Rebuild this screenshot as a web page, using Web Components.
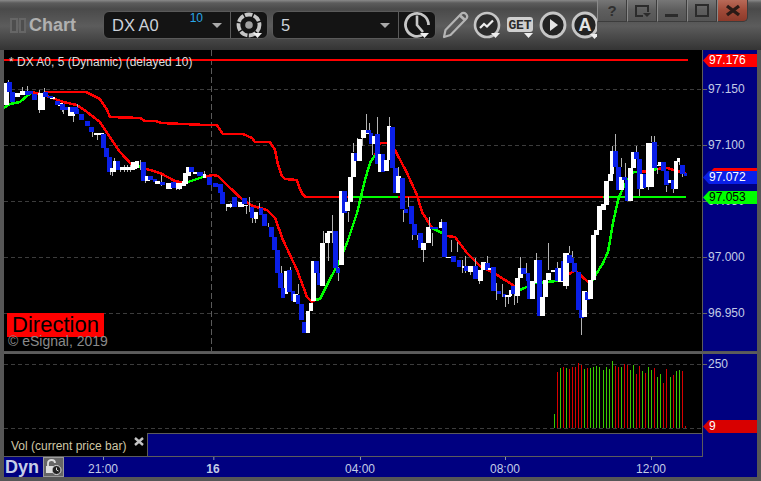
<!DOCTYPE html>
<html lang="en">
<head>
<meta charset="UTF-8">
<title>Chart</title>
<style>
  html, body { margin: 0; padding: 0; background: #555; }
  body { font-family: "Liberation Sans", Arial, sans-serif; }
</style>
</head>
<body>
<es-window>
  <es-titlebar slot="title"></es-titlebar>
  <es-price-chart slot="price"></es-price-chart>
  <es-axis slot="price-axis" kind="price"></es-axis>
  <es-volume slot="volume"></es-volume>
  <es-study-tab slot="tab" label="Vol (current price bar)"></es-study-tab>
  <es-axis slot="volume-axis" kind="volume"></es-axis>
  <es-time-axis slot="time"></es-time-axis>
</es-window>

<script>
  // small helper, every component sets its markup in an open shadow root
  class Base extends HTMLElement {
    constructor() {
      super();
      this.attachShadow({ mode: 'open' });
    }
    connectedCallback() {
      this.shadowRoot.innerHTML = this.markup();
    }
  }

  const CARET = (x, y) => `<path d="M${x} ${y}h9l-4.5 5z" fill="#eee"/>`;

  class EsWindow extends Base {
    markup() {
      return `
        <style>
          :host { display: flex; flex-direction: column; width: 761px; height: 481px; box-sizing: border-box;
            padding: 0 4px 4px; background: #565656; overflow: hidden; }
          .title { display: block; flex: none; height: 50px; margin: 0 -4px; }
          .row { display: flex; }
          .price { height: 301px; }
          .sep { height: 2px; flex: none; margin-right: 0; background: #5c5c5c; margin-top: 1px; }
          .lower { height: 103px; }
          .col { display: flex; flex-direction: column; width: 698px; flex: none; }
          .right { width: 54px; flex: none; border-left: 1px solid #5c5c5c; background: #000080; }
          .time { height: 20px; flex: none; }
          ::slotted([slot=price]), ::slotted([slot=volume]) { flex: none; width: 698px; }
          ::slotted([slot=price-axis]), ::slotted([slot=volume-axis]) { flex: 1; }
        </style>
        <div class="title"><slot name="title"></slot></div>
        <div class="row price"><slot name="price"></slot><div class="right" style="display:flex"><slot name="price-axis"></slot></div></div>
        <div class="sep"></div>
        <div class="row lower">
          <div class="col"><slot name="volume"></slot><slot name="tab"></slot></div>
          <div class="right" style="display:flex"><slot name="volume-axis"></slot></div>
        </div>
        <div class="time"><slot name="time"></slot></div>`;
    }
  }

  class EsCombo extends Base {
    markup() {
      const badge = this.getAttribute('badge');
      return `
        <style>
          :host { display: flex; align-items: stretch; height: 28px; box-sizing: border-box; background: #141414;
            border: 1px solid #5a5a5a; border-radius: 6px; color: #ccd2da; font-size: 16.5px; }
          .field { flex: 1; display: flex; align-items: center; padding-left: 8px; position: relative; }
          .badge { position: absolute; top: 0; right: 27px; font-size: 12px; line-height: 13px; color: #2aa6e6; }
          .caret { margin-left: auto; margin-right: 8px; width: 0; height: 0; border: 5px solid transparent;
            border-top: 5px solid #aaa; border-bottom: 0; }
          .tool { width: 36px; flex: none; border-left: 1px solid #5a5a5a; display: flex; align-items: center; justify-content: center; }
        </style>
        <div class="field">${this.getAttribute('value')}
          ${badge ? `<span class="badge">${badge}</span>` : ''}
          <span class="caret"></span></div>
        <div class="tool"><slot></slot></div>`;
    }
  }

  class EsWinControls extends Base {
    markup() {
      const d = '#2b2b2b';
      return `
        <style>
          :host { display: flex; height: 22px; align-self: flex-start; }
          .b { width: 30px; box-sizing: border-box; height: 22px; display: flex; align-items: center; justify-content: center;
            background: linear-gradient(#777, #5f5f5f 45%, #555); border-right: 1px solid #3c3c3c;
            border-bottom: 1px solid #3c3c3c; border-left: 1px solid #8a8a8a; color: #2f2f2f; font: bold 15px "Liberation Sans", sans-serif; }
          .b:first-child { border-bottom-left-radius: 4px; }
          .x { width: 31px; background: linear-gradient(#b86a58, #a04a38 50%, #8c3a2a); border-bottom-right-radius: 5px; }
        </style>
        <div class="b">?</div>
        <div class="b"><svg width="20" height="18" fill="none" stroke="${d}" stroke-width="2"><path d="M11 14H4V4h12v6"/><path d="M11 11h8l-4 4z" fill="${d}" stroke="none"/></svg></div>
        <div class="b"><svg width="16" height="16"><rect x="1" y="11" width="13" height="3" fill="${d}"/></svg></div>
        <div class="b"><svg width="16" height="16" fill="none" stroke="${d}" stroke-width="2"><rect x="2" y="2" width="12" height="11"/></svg></div>
        <div class="b x"><svg width="16" height="16" stroke="#2b1a16" stroke-width="3.4"><path d="M2 3l12 9M14 3L2 12"/></svg></div>`;
    }
  }

  class EsTitlebar extends Base {
    markup() {
      const ring = '#c6c6c6';
      return `
        <style>
          :host { display: flex; align-items: center; height: 50px; padding-left: 10px; box-sizing: border-box;
            background: linear-gradient(#8a8a8a, #5c5c5c 3px, #4a4a4a 9px, #5c5c5c 26px, #343434 50px); overflow: hidden; }
          .grip { width: 16px; height: 15px; display: flex; gap: 1px; margin-right: 3px; }
          .grip i { flex: 1; border: 2px solid #666; background: #4e4e4e; }
          .name { font: bold 18px "Liberation Sans", sans-serif; color: #b0b0b0; width: 74px; }
          es-combo { flex: none; }
          .sym { width: 165px; }
          .per { width: 164px; margin-left: 4px; }
          svg { display: block; flex: none; }
          .tools { display: flex; align-items: center; width: 161px; flex: none; overflow: hidden; height: 50px; }
        </style>
        <div class="grip"><i></i><i></i></div>
        <div class="name">Chart</div>
        <es-combo class="sym" value="DX A0" badge="10">
          <svg width="30" height="28" viewBox="0 0 30 28">
            <circle cx="15" cy="14" r="10.500" fill="none" stroke="${ring}" stroke-width="3.800" stroke-dasharray="7.600 1.400"/>
            <circle cx="15" cy="14" r="3.800" fill="#a0a0a0"/>
            ${CARET(19, 22)}
          </svg>
        </es-combo>
        <es-combo class="per" value="5">
          <svg width="30" height="28" viewBox="0 0 30 28">
            <path d="M22 23A11.500 11.500 0 1 1 26.500 14" fill="none" stroke="${ring}" stroke-width="2.800"/>
            <path d="M15 4.500V14l6 7" fill="none" stroke="${ring}" stroke-width="2.600"/>
            ${CARET(18, 22)}
          </svg>
        </es-combo>
        <div class="tools">
          <svg width="34" height="30" viewBox="0 0 34 30" style="margin-left:2px">
            <path d="M6 27l1.500-7L23 4c1.500-1.500 3.500-1.500 5 0s1.500 3.500 0 5L12.500 25z" fill="none" stroke="#b4b4b4" stroke-width="2.200" stroke-linejoin="round"/>
            <path d="M22 5.500l5.500 5" stroke="#b4b4b4" stroke-width="3"/>
          </svg>
          <svg width="30" height="30" viewBox="0 0 30 30">
            <circle cx="15" cy="15" r="12" fill="#2c2c2c" stroke="${ring}" stroke-width="2.600"/>
            <path d="M8 18l4-4 3 2.500 6-6" fill="none" stroke="#eee" stroke-width="2.200"/>
            ${CARET(19, 23)}
          </svg>
          <svg width="30" height="30" viewBox="0 0 30 30" style="margin-left:3px">
            <rect x="2" y="7" width="26" height="15" rx="3" fill="#cfcfcf"/>
            <text x="15" y="19" text-anchor="middle" font-family="Liberation Mono" font-weight="bold" font-size="13" fill="#2a2a2a" textLength="23">GET</text>
            ${CARET(19, 23)}
          </svg>
          <svg width="30" height="30" viewBox="0 0 30 30" style="margin-left:3px">
            <circle cx="15" cy="15" r="12" fill="#232323" stroke="${ring}" stroke-width="2.800"/>
            <path d="M12 9l8 6-8 6z" fill="#e4e4e4"/>
          </svg>
          <svg width="30" height="30" viewBox="0 0 30 30" style="margin-left:2px">
            <circle cx="15" cy="15" r="12" fill="#232323" stroke="${ring}" stroke-width="2.800"/>
            <text x="15" y="21" text-anchor="middle" font-family="Liberation Sans" font-weight="bold" font-size="18" fill="#e4e4e4">A</text>
            ${CARET(20, 24)}
          </svg>
        </div>
        <es-win-controls></es-win-controls>`;
    }
  }

  // candles as [colour, left, right, top, bottom] in screen coordinates, read off the chart
  const CANDLES = `W4 9 83 105,B7 12 82 92,B10 15 92 102,W15 20 93 97,W20 25 91 95,B25 30 91 95,B28 33 91 94,B32 37 94 100,W38 45 93 110,B43 48 92 97,
W50 55 97 99,B48 53 96 98,W58 63 103 106,B55 60 101 105,B60 65 104 110,B65 70 107 110,W68 75 107 116,B70 78 107 112,B74 79 109 114,B79 84 114 120,B85 90 121 126,B89 94 127 132,W94 104 133 135,B101 106 134 148,
B104 109 148 157,B107 112 157 172,W110 115 168 172,W113 116 161 172,B116 120 161 170,W120 135 167 170,W131 137 162 169,W135 139 161 168,B141 146 162 181,W145 150 176 181,
B148 153 176 180,B153 157 179 182,W155 160 181 184,B160 165 182 185,W166 172 183 189,B171 176 182 188,W176 182 183 189,W182 186 181 186,W183 188 173 184,W186 191 167 176,
B189 194 167 172,W193 198 172 174,B197 203 172 176,W203 206 174 178,B207 212 177 185,B213 218 183 187,B218 223 184 193,B220 225 192 204,W226 232 204 207,B232 237 197 207,
W238 244 202 207,B242 247 198 204,W244 248 205 206,B250 254 207 218,W254 258 212 219,B259 263 208 215,B262 267 214 226,B269 274 227 237,B272 277 237 250,B275 280 250 273,
B278 283 273 288,W284 288 271 294,B281 285 288 298,B287 292 270 292,B291 295 291 301,W293 298 294 302,B296 300 295 304,B299 304 304 320,B302 307 322 333,W306 310 311 333,
W309 313 303 311,W311 316 261 301,B314 319 261 273,B317 320 273 285,W320 325 243 286,W325 330 233 243,W327 332 231 233,B333 338 231 268,B336 340 268 273,W339 344 191 265,
B342 347 191 213,W345 350 202 211,W348 353 177 202,W351 356 153 177,B354 359 153 161,W357 362 139 161,W361 366 130 138,W363 368 130 133,W366 370 130 134,B366 371 130 133,
B369 373 133 144,W372 376 136 144,B375 380 134 164,W378 384 154 172,B381 385 154 172,W384 389 160 171,W387 391 126 160,B390 395 127 168,B393 398 168 193,W396 401 176 193,
B400 405 178 209,B404 408 209 213,B409 414 206 224,B412 417 224 235,B418 423 233 248,W421 426 243 250,W426 431 227 243,W430 434 227 229,B430 438 227 229,W439 443 222 228,
B442 447 222 257,W446 451 257 258,B451 456 256 262,B457 461 260 267,W462 466 266 268,B464 468 266 271,W468 473 266 272,B473 478 266 279,W478 483 270 281,W481 486 262 270,
B485 490 263 270,W488 491 268 270,B491 496 267 291,B497 501 291 294,B503 506 294 297,W505 511 295 297,W509 512 290 296,B511 516 286 294,W515 520 278 296,W518 523 268 278,
B521 526 268 274,B526 530 273 281,B527 532 281 299,W530 535 281 299,W534 539 260 283,B537 542 260 316,W540 545 297 316,W543 548 280 297,W546 551 273 280,W551 556 270 272,
B555 560 268 281,W558 563 268 282,B561 566 261 281,W563 569 253 286,B567 572 255 263,B571 574 258 263,B572 577 263 272,B576 581 272 310,B579 584 310 318,W582 587 291 317,
B585 590 292 300,W588 593 280 299,W591 596 235 280,W594 599 230 235,W597 602 206 230,W601 606 204 210,W604 609 181 205,W608 613 174 181,W610 614 151 174,B613 618 151 167,
B616 621 167 190,W619 624 177 190,B622 627 177 180,B625 630 180 201,W628 633 168 201,W631 636 152 168,B634 639 152 159,B637 642 159 189,W640 644 174 189,B643 646 174 188,
W646 651 143 187,W650 654 143 187,B652 657 142 168,W657 662 165 166,W658 663 162 165,B661 666 162 171,B664 669 171 185,W668 673 180 183,B671 674 180 189,W674 678 161 189,
W677 680 158 162,B680 685 165 174,B684 687 173 176`;

  // wicks as x y1 y2
  const WICKS = `8 80 84,27 86 92,22 87 92,39 90 113,44 88 92,62 103 112,63 108 114,73 115 122,77 104 108,92 131 137,97 134 140,110 170 175,112 172 176,114 158 162,120 168 172,
124 165 172,127 165 172,130 165 172,140 160 170,145 177 183,161 175 186,176 188 190,179 186 190,204 171 177,226 207 211,230 203 208,246 206 214,249 197 212,252 218 223,255 215 223,
259 203 215,268 223 227,281 266 273,290 267 272,298 284 294,323 231 243,328 243 261,332 215 243,338 267 281,348 212 222,353 143 152,357 138 152,362 135 146,366 114 130,369 123 130,
372 143 155,377 117 134,389 117 126,398 167 176,403 210 222,408 197 207,412 235 240,417 235 240,423 250 262,429 217 227,432 233 246,441 219 222,451 240 252,457 242 252,462 260 273,
465 256 273,470 270 275,475 258 267,479 280 284,487 256 263,496 283 300,502 284 297,505 297 307,508 297 304,514 293 305,517 295 303,520 257 268,526 263 273,536 253 260,548 243 270,
557 262 268,566 286 289,569 246 253,572 251 257,581 318 335,612 146 151,615 134 151,621 158 167,625 163 178,636 146 152,639 189 196,648 187 190,651 136 142,654 136 142,657 168 174,
666 186 192,673 189 193,679 158 165,682 174 177`;

  const RED_LINES = [
    '45,92 86,92 100,99 107,110 110,117 140,118 145,121 155,121 162,123 205,125 217,125 223,134 243,134 252,138 255,142 270,142 272,145 275,150 278,165 282,176 285,179 297,180 299,187 303,195 306,197 353,197',
    '398,197 603,197',
    '32,92 50,97 63,102 77,105 87,112 100,122 110,137 120,152 132,165 135,166',
    '140,167 160,173 175,181 185,183',
    '203,177 213,175 218,176 227,185 243,200 253,206 267,210 275,218 283,240 297,270 307,297 312,302 315,300',
    '375,155 380,143 387,143 395,150 407,173 417,195 422,212 432,228',
    '442,233 447,236 455,237 467,253 480,266 497,275 513,285 520,290',
    '568,275 575,270 588,282 592,281',
    '640,172 648,171',
    '657,169 667,168 687,174'
  ];
  const GREEN_LINES = [
    '4,108 10,104 20,102 27,96 32,92',
    '135,166 141,167',
    '185,183 203,177',
    '315,300 320,299 328,283 340,260 347,243 357,213 365,180 370,163 375,155',
    '353,197 398,197',
    '432,228 442,233',
    '520,290 535,283 557,281 568,275',
    '592,281 603,263 608,252 613,223 618,200 623,188 633,172 640,172',
    '648,171 657,169',
    '603,197 686,197'
  ];

  const pts = s => s.split(',').map(c => c.trim());
  const polyline = (p, c) => `<polyline points="${p}" fill="none" stroke="${c}" stroke-width="2.500" shape-rendering="crispEdges"/>`;

  class EsPriceChart extends Base {
    markup() {
      const grid = [89, 145, 201, 257, 313].map(y => `<path d="M4 ${y + .5}H702" class="g"/>`).join('');
      const wicks = pts(WICKS).map(w => {
        const [x, a, b] = w.split(' ');
        return `<rect x="${x}" y="${a}" width="1" height="${b - a}" fill="#b4b4b4"/>`;
      }).join('');
      const candles = pts(CANDLES).map(c => {
        const col = c[0] === 'W' ? '#fff' : '#0a1fe8';
        const [l, r, t, b] = c.slice(1).split(' ').map(Number);
        return `<rect x="${l}" y="${t}" width="${r - l}" height="${b - t}" fill="${col}"/>`;
      }).join('');
      return `
        <style>
          :host { display: block; position: relative; height: 301px; background: #000; overflow: hidden; }
          svg { display: block; }
          .g { stroke: #3c3c3c; stroke-dasharray: 4 3; shape-rendering: crispEdges; }
          .v { stroke: #5a5a5a; stroke-dasharray: 6 3; shape-rendering: crispEdges; }
          .rects rect { shape-rendering: crispEdges; }
          .info { position: absolute; left: 5px; top: 5px; font-size: 12px; line-height: 14px; color: #dcdcdc; white-space: nowrap; }
          .dir { position: absolute; left: 3px; top: 263px; width: 97px; height: 24px; background: #f00; color: #000;
            font-size: 22px; line-height: 24px; text-align: center; }
          .copy { position: absolute; left: 4px; top: 283px; font-size: 14px; line-height: 16px; color: #8a8a8a; white-space: nowrap; }
        </style>
        <svg width="698" height="301" viewBox="4 50 698 301">
          ${grid}
          <path d="M211.500 50V351" class="v"/>
          <rect x="4" y="59" width="684" height="2" fill="#f00"/>
          ${RED_LINES.map(p => polyline(p, '#f00')).join('')}
          ${GREEN_LINES.map(p => polyline(p, '#0f0')).join('')}
          <g class="rects">${wicks}${candles}</g>
        </svg>
        <div class="info">* DX A0, 5 (Dynamic) (delayed 10)</div>
        <div class="dir">Direction</div>
        <div class="copy">© eSignal, 2019</div>`;
    }
  }

  // offset from the left of the crop at 520, top of the bar, colour
  const VOL = `103 414 G,112 372 R,121 368 G,130 367 R,139 368 G,148 369 R,157 367 R,166 367 R,175 363 R,184 365 R,193 369 G,202 368 R,211 368 G,220 367 G,229 366 G,238 367 G,250 370 G,259 367 G,268 369 G,
277 361 G,286 366 R,295 367 R,304 367 G,313 364 R,322 365 R,331 370 G,340 365 G,349 374 R,358 366 R,367 371 G,376 373 R,385 367 G,394 370 G,403 368 R,412 377 G,421 374 G,430 383 R,439 369 R,451 377 G,460 375 R,469 371 G,478 370 G,487 371 R,496 426 R`;

  class EsVolume extends Base {
    markup() {
      const bars = pts(VOL).map(v => {
        const [z, top, c] = v.split(' ');
        const x = 520 + Math.floor(z / 3);
        return `<rect x="${x}" y="${top}" width="1" height="${428 - top}" fill="${c === 'G' ? '#3cc800' : '#d80000'}"/>`;
      }).join('');
      return `
        <style>
          :host { display: block; height: 79px; background: #000; }
          svg { display: block; }
          .g { stroke: #3c3c3c; stroke-dasharray: 4 3; shape-rendering: crispEdges; }
          rect { shape-rendering: crispEdges; }
        </style>
        <svg width="698" height="79" viewBox="4 354 698 79">
          <path d="M4 364.500H702M4 428.500H702" class="g"/>
          ${bars}
        </svg>`;
    }
  }

  class EsStudyTab extends Base {
    markup() {
      return `
        <style>
          :host { display: flex; height: 24px; box-sizing: border-box; background: #000; border-bottom: 1px solid #5c5c5c; }
          .name { width: 143px; flex: none; display: flex; align-items: center; position: relative; padding-left: 7px; box-sizing: border-box;
            font-size: 12px; color: #cfc7a6; white-space: nowrap; padding-top: 2px; }
          .x { position: absolute; left: 130px; top: 4px; }
          .rest { flex: 1; background: #000080; border-top: 1px solid #5c5c5c; border-left: 1px solid #5c5c5c; }
        </style>
        <div class="name">${this.getAttribute('label')}
          <svg class="x" width="10" height="9" stroke="#c4c4c4" stroke-width="2.400"><path d="M1 1l8 7M9 1L1 8"/></svg>
        </div>
        <div class="rest"></div>`;
    }
  }

  class EsAxis extends Base {
    markup() {
      // y is relative to this axis: price starts at 50, volume at 354
      const price = this.getAttribute('kind') === 'price';
      const labels = price
        ? [['97.150', 39], ['97.100', 95], ['97.050', 151], ['97.000', 207], ['96.950', 263]]
        : [['250', 10]];
      const tags = price
        ? [['97.176', 4, '#f00', '#fff', 0], ['', 118, '#f00', '#fff', 5], ['97.072', 121, '#0a1fe8', '#fff', 0], ['97.053', 141, '#0f0', '#000', 0]]
        : [['9', 66, '#d80000', '#fff', 0]];
      return `
        <style>
          :host { display: block; position: relative; font-size: 12px; color: #c2cbe6; overflow: hidden; }
          .l { position: absolute; left: 0; height: 14px; line-height: 14px; padding-left: 5px; white-space: nowrap; }
          .l::before { content: ""; position: absolute; left: 0; top: 7px; width: 4px; height: 1px; background: #666; }
          .t { position: absolute; left: 0; right: 0; height: 13px; line-height: 13px; padding-left: 6px; box-sizing: border-box;
            clip-path: polygon(0 50%, 6px 0, 100% 0, 100% 100%, 6px 100%); }
        </style>
        ${labels.map(([t, y]) => `<div class="l" style="top:${y - 7}px">${t}</div>`).join('')}
        ${tags.map(([t, y, bg, fg, inset]) => `<div class="t" style="top:${y}px;background:${bg};color:${fg};left:${inset}px">${t}</div>`).join('')}`;
    }
  }

  class EsTimeAxis extends Base {
    markup() {
      const ticks = [['21:00', 103], ['16', 213, 1], ['04:00', 360], ['08:00', 505], ['12:00', 651]];
      return `
        <style>
          :host { display: flex; align-items: center; height: 20px; position: relative; background: #000080; color: #c2cbe6; font-size: 12px; }
          .dyn { font: bold 18px "Liberation Sans", sans-serif; color: #c6cee6; padding-left: 1px; width: 38px; flex: none; }
          .lock { width: 21px; height: 20px; flex: none; background: #666; box-sizing: border-box; border: 1px solid #9a9a9a; }
          .lock svg { display: block; }
          .tick { position: absolute; top: 4px; transform: translateX(-50%); line-height: 16px; white-space: nowrap; }
          .tick::before { content: ""; position: absolute; left: 50%; top: -4px; width: 1px; height: 3px; background: #8a92b0; }
          .b { font-weight: bold; }
        </style>
        <div class="dyn">Dyn</div>
        <div class="lock"><svg width="19" height="18" viewBox="0 0 19 18">
          <path d="M4 8V5c0-4 7-4 7 0" fill="none" stroke="#ddd" stroke-width="1.800"/>
          <rect x="2" y="8" width="10" height="7" fill="#ddd"/>
          <circle cx="12.500" cy="12" r="4.500" fill="#222" stroke="#ddd"/>
          <path d="M12.500 9.500V12l2 1" stroke="#ddd" fill="none"/>
        </svg></div>
        ${ticks.map(([t, x, b]) => `<div class="tick ${b ? 'b' : ''}" style="left:${x - 4}px">${t}</div>`).join('')}`;
    }
  }

  customElements.define('es-window', EsWindow);
  customElements.define('es-combo', EsCombo);
  customElements.define('es-win-controls', EsWinControls);
  customElements.define('es-titlebar', EsTitlebar);
  customElements.define('es-price-chart', EsPriceChart);
  customElements.define('es-volume', EsVolume);
  customElements.define('es-study-tab', EsStudyTab);
  customElements.define('es-axis', EsAxis);
  customElements.define('es-time-axis', EsTimeAxis);
</script>
</body>
</html>
